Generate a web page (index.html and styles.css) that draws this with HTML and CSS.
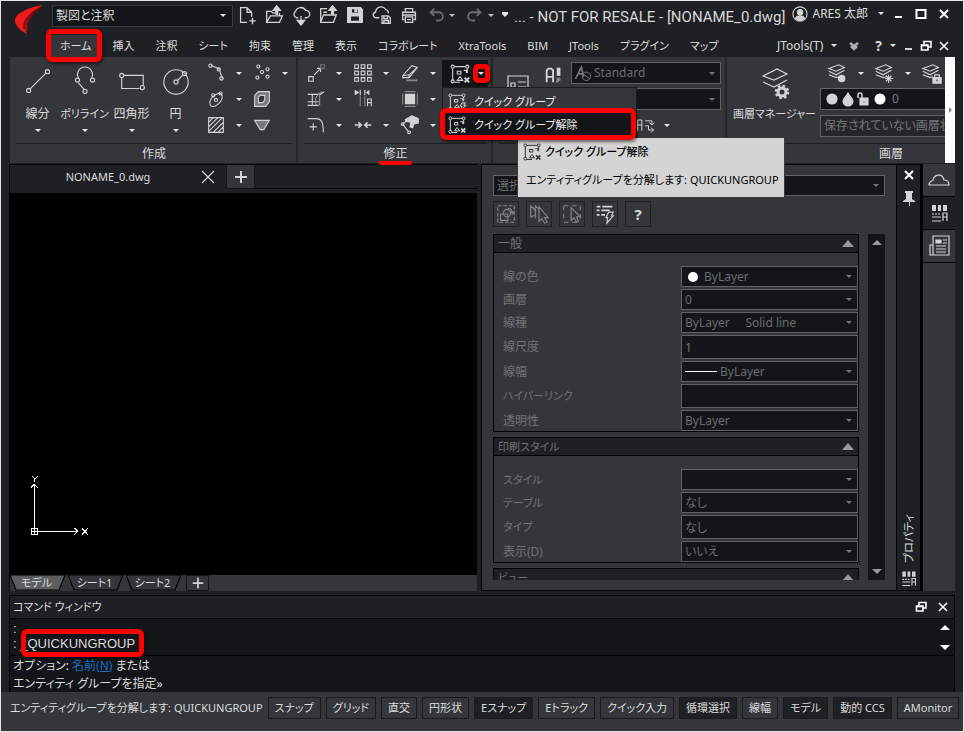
FILE: index.html
```html
<!DOCTYPE html>
<html lang="ja">
<head>
<meta charset="utf-8">
<title>ARES - NONAME_0.dwg</title>
<link rel="stylesheet" href="styles.css">
</head>
<body>
<svg class="defs" aria-hidden="true">
  <symbol id="i-new" viewBox="0 0 24 24"><path d="M12 20H5V4h7l5 5v5M12 4v5h5M18 15v7M14.500 18.500h7"/></symbol>
  <symbol id="i-open" viewBox="0 0 24 24"><path d="M4 20V8h5l2 2h2M4 20l4-7h13l-3 7zM18 13V10"/><path class="f" d="M15 2l4 5h-3v4h-2V7h-3z"/></symbol>
  <symbol id="i-cloud" viewBox="0 0 24 24"><path d="M9 15H7a4 4 0 0 1-1-7 6 6 0 0 1 11-1 4 4 0 0 1 1 8h-2M12 13v5"/><path class="f" d="M8 18h8l-4 5z"/></symbol>
  <symbol id="i-recent" viewBox="0 0 24 24"><path d="M4 20V5h7M18 8V4M4 20l3-8h14l-3 8zM7 9h4"/><path class="f" d="M17 2l4 5h-3v4h-2V7h-3z"/></symbol>
  <symbol id="i-save" viewBox="0 0 24 24"><path class="f" fill-rule="evenodd" d="M4 4h14l2 2v14H4zM8 5v5h8V5h-2v3h-2V5zM7 13v6h10v-6z"/></symbol>
  <symbol id="i-csave" viewBox="0 0 24 24"><path d="M9 15H6a3 3 0 0 1-1-6 6 6 0 0 1 11-3 4 4 0 0 1 3 4M12 13h7l2 2v6h-9zM14 13v3h4v-3M14 21v-3h5v3"/></symbol>
  <symbol id="i-print" viewBox="0 0 24 24"><path d="M8 9V5h8v4M7 17H5V9h14v8h-2M8 14h8v6H8zM10 17h4M5 12h14"/></symbol>
  <symbol id="i-undo" viewBox="0 0 24 24"><path stroke-width="2" d="M7 9h8a4 4 0 0 1 0 9h-3M10 5L6 9l4 4"/></symbol>
  <symbol id="i-redo" viewBox="0 0 24 24"><path stroke-width="2" d="M17 9H9a4 4 0 0 0 0 9h3M14 5l4 4-4 4"/></symbol>
  <symbol id="i-line" viewBox="0 0 32 32"><path d="M7 25L25 7"/><circle cx="6" cy="26" r="2.200"/><circle cx="26" cy="6" r="2.200"/></symbol>
  <symbol id="i-poly" viewBox="0 0 32 32"><path d="M15 25L9 18M9 13a8 8 0 1 1 14 0"/><circle cx="8" cy="15" r="2.200"/><circle cx="24" cy="15" r="2.200"/><circle cx="16" cy="27" r="2.200"/></symbol>
  <symbol id="i-rect" viewBox="0 0 32 32"><path d="M7 10h21v11M24 24H5V12"/><circle cx="5" cy="10" r="2.200"/><circle cx="27" cy="23" r="2.200"/></symbol>
  <symbol id="i-circ" viewBox="0 0 32 32"><circle cx="16" cy="17" r="13"/><path d="M17 16l6-6"/><circle cx="16" cy="17" r="2.200"/><circle cx="25" cy="8" r="2.200"/></symbol>
  <symbol id="i-arc" viewBox="0 0 24 24"><path d="M7 4l8 3 4 11"/><circle cx="6" cy="4" r="1.800"/><circle cx="15" cy="8" r="1.800"/><circle cx="18" cy="18" r="1.800"/></symbol>
  <symbol id="i-dots" viewBox="0 0 24 24"><circle cx="8" cy="5" r="1.700"/><circle cx="18" cy="8" r="1.700"/><circle cx="12" cy="11" r="1.700"/><circle cx="7" cy="17" r="1.700"/><circle cx="18" cy="16" r="1.700"/></symbol>
  <symbol id="i-ell" viewBox="0 0 24 24"><ellipse cx="12" cy="13" rx="8.500" ry="5" transform="rotate(-48 12 13)"/><circle cx="12" cy="13" r="1.700"/><circle cx="9" cy="8" r="1.700"/><circle cx="17" cy="6" r="1.700"/></symbol>
  <symbol id="i-region" viewBox="0 0 24 24"><path fill="#77797b" fill-rule="evenodd" d="M4 8l4-4h12v11l-4 5H4zM8 10l2-2h5v5l-2 3H8z"/></symbol>
  <symbol id="i-hatch" viewBox="0 0 24 24"><path d="M4 4h16v16H4zM4 9l5-5M4 14L14 4M4 19L19 4M9 20L20 9M14 20l6-6"/></symbol>
  <symbol id="i-wipe" viewBox="0 0 24 24"><path fill="#77797b" d="M4 7h16l-6 10h-4z"/></symbol>
  <symbol id="i-move" viewBox="0 0 24 24"><path d="M4 16h5v5H4zM10 14l6-6M13 7h4v4"/><path stroke="#777" d="M17 3h4v4h-4z"/></symbol>
  <symbol id="i-trim" viewBox="0 0 24 24"><path d="M3 7h14l4-3M3 15h12M3 19h12M8 7v11"/><path stroke="#999" d="M16 5v14M19 4c-8 4-8 7-7 15"/></symbol>
  <symbol id="i-fillet" viewBox="0 0 24 24"><path d="M3 5h9c6 0 8 4 8 15M5 14h8M9 10v8"/></symbol>
  <symbol id="i-array" viewBox="0 0 24 24"><path d="M3 3h4v4H3zM10 3h4v4h-4zM17 3h4v4h-4zM3 10h4v4H3zM10 10h4v4h-4zM17 10h4v4h-4zM3 17h4v4H3zM10 17h4v4h-4zM17 17h4v4h-4z"/></symbol>
  <symbol id="i-mirror" viewBox="0 0 24 24"><path class="f" stroke="none" d="M3 2l5 3-5 3zM19 2l-4 3 4 3z"/><path d="M9 2v6M14 2v6M17 20v-8h4v8M17 16h4"/><path stroke="#888" d="M9 9v11M14 9v11"/></symbol>
  <symbol id="i-join" viewBox="0 0 24 24"><path stroke-width="1.800" d="M3 12h7M7 9l3 3-3 3M21 12h-7M17 9l-3 3 3 3"/></symbol>
  <symbol id="i-erase" viewBox="0 0 24 24"><path d="M4 15L14 4l6 2-9 11H4zM4 15l7-1 9-8M11 14v3"/><path stroke-width="2" stroke="#888" d="M8 20h12"/></symbol>
  <symbol id="i-offset" viewBox="0 0 24 24"><path class="f" d="M7 7h10v10H7z"/><path stroke="#888" d="M4 6v12M20 6v12M6 4h12M6 20h12"/></symbol>
  <symbol id="i-hand" viewBox="0 0 24 24"><path class="f" d="M7 6l7-4 7 3v5l-5 1-1 4-3-1 1-5-6-1z"/><path d="M4 11l6 8M4 11l5-4"/><circle cx="11" cy="20" r="1.500"/><circle cx="4" cy="11" r="1.500"/></symbol>
  <symbol id="i-group" viewBox="0 0 24 24"><path d="M4 6v13M6 4h12M20 6v5M6 21h6M9 9h4v3H9zM16 8h3v3M12 15l-3 4h6z"/><circle cx="4" cy="4" r="1.700"/><circle cx="20" cy="4" r="1.700"/><circle cx="4" cy="20" r="1.700"/></symbol>
  <symbol id="i-ungroup" viewBox="0 0 24 24"><use href="#i-group"/><path stroke-width="2" d="M17 16l5 5M22 16l-5 5"/></symbol>
  <symbol id="i-qgroup" viewBox="0 0 24 24"><use href="#i-group"/><path fill="#35363a" d="M18 13h4l-2 3h3l-7 6 2-5h-2z"/></symbol>
  <symbol id="i-mtext" viewBox="0 0 24 24"><path d="M2 22V6h20v16M5 22v-9h4v9M5 17h4M12 12h8M12 17h8"/></symbol>
  <symbol id="i-style" viewBox="0 0 24 24"><path stroke-width="2" d="M4 20V7l2-2h3l2 2v13M4 14h7"/><path class="f" stroke="none" d="M15 4h4v9h-4z"/><path fill="#888" stroke="none" d="M15 15h4v3l-5 3z"/></symbol>
  <symbol id="i-annot" viewBox="0 0 24 24"><path stroke-width="2" d="M3 19l7-14 3 12M6 13h6"/><circle cx="16" cy="16" r="5"/><path d="M12 13l8 6"/></symbol>
  <symbol id="i-find" viewBox="0 0 24 24"><path d="M2 19V6h5v13M2 12h5M11 7h8v4M16 9l3 3 3-3M11 13h4v5h6M18 15l3 3-3 3"/></symbol>
  <symbol id="i-lman" viewBox="0 0 32 34"><path d="M4 10l14-7 10 5-13 6zM4 16l11 5 13-7"/><circle cx="23" cy="26" r="4" stroke-width="3"/><circle cx="23" cy="26" r="6" stroke-width="2.500" stroke-dasharray="2.400 2.300"/></symbol>
  <symbol id="i-lon" viewBox="0 0 24 24"><path d="M2 7l11-4 6 3-9 4zM2 10l8 4 9-5M2 14l8 3 3-1"/><circle class="f" cx="16" cy="18" r="3.500"/></symbol>
  <symbol id="i-lfr" viewBox="0 0 24 24"><path d="M2 7l11-4 6 3-9 4zM2 10l8 4 9-5M2 14l8 3 3-1M16 14v9M12 18h9M13 15l6 6M19 15l-6 6"/></symbol>
  <symbol id="i-llk" viewBox="0 0 24 24"><path d="M2 7l11-4 6 3-9 4zM2 10l8 4 9-5M2 14l8 3 3-1M15 17v-3h5v3"/><path class="f" d="M13 17h9v6h-9z"/><path stroke="#222" d="M17.500 19v2"/></symbol>
  <symbol id="i-pick" viewBox="0 0 24 24"><path stroke-dasharray="4 2" d="M3 3h18v18H3z"/><path d="M6 12h8v7H6zM14 6c4 0 5 2 5 5M17 9l2 3 2-3"/><circle cx="13" cy="11" r="4"/></symbol>
  <symbol id="i-multi" viewBox="0 0 24 24"><path d="M3 16V3l6 6M3 16l4-3M8 17V3l4 4M12 4v16l3-3 3 5 3-1-3-5h4z"/></symbol>
  <symbol id="i-sel" viewBox="0 0 24 24"><path stroke-dasharray="5 4" d="M3 3h18M3 3v18M21 3v18M3 21h18"/><path fill="#35363a" d="M11 5v14l3-3 3 5 2-1-2-5h4z"/></symbol>
  <symbol id="i-quick" viewBox="0 0 24 24"><path stroke-width="2" d="M3 4h4M9 4h11M3 8h3M8 8h9M3 13h3M8 13h4"/><path d="M16 10h5l-2 4h2l-7 8 1-6h-2z"/></symbol>
  <symbol id="i-prop" viewBox="0 0 24 24"><path class="f" stroke="none" d="M5 4h4v6H5zM11 4h3v6h-3zM16 4h4v6h-4z"/><path stroke-dasharray="2 1" d="M5 13h9"/><path d="M5 16h9M5 20h9M16 20v-8h4v8M16 16h4"/></symbol>
  <symbol id="i-news" viewBox="0 0 24 24"><path d="M6 2h16v19H3V11h3zM6 11v10M9 12h10M9 15h10M9 18h10M16 6h4M16 9h4"/><path class="f" d="M9 6h5v3H9z"/></symbol>
  <symbol id="i-cl" viewBox="0 0 24 24"><path d="M2 17c0-4 3-4 4-5 1-5 9-8 11 0 3 0 5 1 5 5z"/></symbol>
  <symbol id="i-pin" viewBox="0 0 16 16"><path class="f" stroke="none" d="M4 1h8v2h-1v6l3 2v1H9v4H8v-4H2v-1l3-2V3H4z"/></symbol>
  <symbol id="i-x" viewBox="0 0 12 12"><path d="M2 2l8 8M10 2l-8 8"/></symbol>
  <symbol id="i-rest" viewBox="0 0 12 12"><path d="M4 4V1.500h7V7H8.500M1.500 5h6.500v5H1.500z"/><path d="M1.500 5.500h6.500"/></symbol>
  <symbol id="i-max" viewBox="0 0 12 12"><path d="M1.500 2h9v8h-9z"/></symbol>
  <symbol id="i-min" viewBox="0 0 12 12"><path d="M3 9h7"/></symbol>
  <symbol id="i-plus" viewBox="0 0 16 16"><path d="M8 2v12M2 8h12"/></symbol>
</svg>

<div class="app">
  <header class="head">
    <svg class="logo" viewBox="0 0 34 34" aria-hidden="true"><path fill="#ee1c1c" d="M31 2C17 4 2 11 3 18c1 6 5 9 12 13-5-7-2-20 16-29z"/><path fill="#b80d12" d="M31 2C13 11 9 22 15 31c-1-10 3-18 16-29z"/><path d="M27 6C17 11 11 18 12 26M28 6c-8 5-12 10-13 16" stroke="#5b0c10" fill="none"/></svg>
    <div class="title">
      <div class="pick wspace"><select aria-label="ワークスペース"><option>製図と注釈</option></select></div>
      <button class="tb" aria-label="新規"><svg><use href="#i-new"/></svg></button>
      <button class="tb" aria-label="開く"><svg><use href="#i-open"/></svg></button>
      <button class="tb" aria-label="クラウドから開く"><svg><use href="#i-cloud"/></svg></button>
      <button class="tb" aria-label="最近の図面"><svg><use href="#i-recent"/></svg></button>
      <button class="tb" aria-label="保存"><svg><use href="#i-save"/></svg></button>
      <button class="tb" aria-label="クラウドに保存"><svg><use href="#i-csave"/></svg></button>
      <button class="tb" aria-label="印刷"><svg><use href="#i-print"/></svg></button>
      <button class="tb dim" aria-label="元に戻す"><svg><use href="#i-undo"/></svg></button>
      <i class="tri"></i>
      <button class="tb dim" aria-label="やり直し"><svg><use href="#i-redo"/></svg></button>
      <i class="tri"></i>
      <i class="tri more"></i>
      <h1>... - NOT FOR RESALE - [NONAME_0.dwg]</h1>
      <button class="user"><svg viewBox="0 0 18 18"><circle cx="9" cy="9" r="8"/><circle class="f" cx="9" cy="7" r="3"/><path class="f" d="M4 14c1-4 9-4 10 0-3 3-7 3-10 0z"/></svg><span>ARES 太郎</span><i class="tri"></i></button>
      <div class="wbtns">
        <button aria-label="最小化"><svg><use href="#i-min"/></svg></button>
        <button aria-label="最大化"><svg><use href="#i-max"/></svg></button>
        <button aria-label="閉じる"><svg><use href="#i-x"/></svg></button>
      </div>
    </div>
    <nav class="tabs">
      <button class="on">ホーム<span class="mark"></span></button><button>挿入</button><button>注釈</button><button>シート</button><button>拘束</button><button>管理</button><button>表示</button><button>コラボレート</button><button>XtraTools</button><button>BIM</button><button>JTools</button><button>プラグイン</button><button>マップ</button>
      <div class="right">
        <button class="jt">JTools(T)<i class="tri"></i></button>
        <svg class="chev" viewBox="0 0 12 12"><path stroke-width="2.500" d="M2 3l4 3 4-3M3 6l3 3 3-3"/></svg>
        <button class="help">?<i class="tri"></i></button>
        <div class="wbtns small">
          <button aria-label="図面を最小化"><svg><use href="#i-min"/></svg></button>
          <button aria-label="図面を元に戻す"><svg><use href="#i-rest"/></svg></button>
          <button aria-label="図面を閉じる"><svg><use href="#i-x"/></svg></button>
        </div>
      </div>
    </nav>
  </header>

  <section class="ribbon">
    <div class="group create">
      <div class="tools">
        <button class="big"><svg><use href="#i-line"/></svg>線分<i class="tri"></i></button>
        <button class="big kana"><svg><use href="#i-poly"/></svg>ポリライン<i class="tri"></i></button>
        <button class="big"><svg><use href="#i-rect"/></svg>四角形<i class="tri"></i></button>
        <button class="big"><svg><use href="#i-circ"/></svg>円<i class="tri"></i></button>
        <div class="smalls two">
          <button aria-label="円弧"><svg><use href="#i-arc"/></svg><i class="tri"></i></button>
          <button aria-label="点"><svg><use href="#i-dots"/></svg><i class="tri"></i></button>
          <button aria-label="楕円"><svg><use href="#i-ell"/></svg><i class="tri"></i></button>
          <button aria-label="領域"><svg><use href="#i-region"/></svg></button>
          <button aria-label="ハッチング"><svg><use href="#i-hatch"/></svg><i class="tri"></i></button>
          <button aria-label="ワイプアウト"><svg><use href="#i-wipe"/></svg></button>
        </div>
      </div>
      <h2>作成</h2>
    </div>
    <div class="group modify">
      <div class="tools">
        <div class="smalls three">
          <button aria-label="移動"><svg><use href="#i-move"/></svg><i class="tri"></i></button>
          <button aria-label="配列"><svg><use href="#i-array"/></svg><i class="tri"></i></button>
          <button aria-label="削除"><svg><use href="#i-erase"/></svg><i class="tri"></i></button>
          <button aria-label="トリム"><svg><use href="#i-trim"/></svg><i class="tri"></i></button>
          <button aria-label="鏡像"><svg><use href="#i-mirror"/></svg></button>
          <button aria-label="オフセット"><svg><use href="#i-offset"/></svg><i class="tri"></i></button>
          <button aria-label="フィレット"><svg><use href="#i-fillet"/></svg><i class="tri"></i></button>
          <button aria-label="結合"><svg><use href="#i-join"/></svg><i class="tri"></i></button>
          <button aria-label="編集"><svg><use href="#i-hand"/></svg><i class="tri"></i></button>
        </div>
        <div class="qg">
          <button class="qgbtn" aria-label="クイック グループ解除"><svg><use href="#i-ungroup"/></svg><i class="tri"></i></button>
          <span class="mark"></span>
          <div class="menu" role="menu">
            <button role="menuitem"><svg><use href="#i-qgroup"/></svg>クイック グループ</button>
            <button role="menuitem" class="on"><svg><use href="#i-ungroup"/></svg>クイック グループ解除</button>
            <span class="mark"></span>
          </div>
          <div class="tip" role="tooltip"><strong><svg><use href="#i-ungroup"/></svg>クイック グループ解除</strong><p>エンティティグループを分解します: QUICKUNGROUP</p></div>
        </div>
      </div>
      <h2><span>修正</span></h2>
    </div>
    <div class="group annot">
      <div class="tools">
        <svg class="mt"><use href="#i-mtext"/></svg>
        <svg class="st"><use href="#i-style"/></svg>
        <div class="fields">
          <div class="pick off"><svg><use href="#i-annot"/></svg><select aria-label="文字スタイル" disabled><option>Standard</option></select></div>
          <div class="pick off"><select aria-label="寸法スタイル" disabled><option></option></select></div>
          <div class="find"><svg><use href="#i-find"/></svg><i class="tri"></i></div>
        </div>
      </div>
      <h2></h2>
    </div>
    <div class="group layer">
      <div class="tools">
        <button class="big lm kana"><svg><use href="#i-lman"/></svg>画層マネージャー</button>
        <div class="lfields">
          <div class="smalls lay">
            <button aria-label="画層表示"><svg><use href="#i-lon"/></svg><i class="tri"></i></button>
            <button aria-label="画層フリーズ"><svg><use href="#i-lfr"/></svg><i class="tri"></i></button>
            <button aria-label="画層ロック"><svg><use href="#i-llk"/></svg></button>
          </div>
          <div class="lbox"><svg viewBox="0 0 64 18"><circle class="f" cx="8" cy="9" r="5"/><path class="f" d="M24 3c2 4 5 6 5 8a5 5 0 0 1-10 0c0-2 3-4 5-8z"/><path d="M34 8V5a2 2 0 0 1 4 0v4" stroke-width="1.500"/><path class="f" fill-rule="evenodd" d="M36 8h8v7h-8zM39 11h2v2h-2z"/><circle cx="56" cy="9" r="5.500" fill="#fff" stroke="none"/></svg>0</div>
          <div class="lbox st2">保存されていない画層状態</div>
        </div>
      </div>
      <h2>画層</h2>
    </div>
    <button class="scroll" aria-label="右へスクロール"></button>
  </section>

  <main class="main">
    <section class="draw">
      <div class="docs"><div class="doc"><span>NONAME_0.dwg</span><button aria-label="閉じる"><svg viewBox="0 0 16 16"><path d="M2 2l12 12M14 2L2 14"/></svg></button></div><button class="add" aria-label="新しい図面"><svg><use href="#i-plus"/></svg></button></div>
      <div class="canvas"><svg viewBox="0 0 64 64"><g stroke="#fff" fill="none" shape-rendering="crispEdges"><path d="M2.500 52.500h6v6h-6zM5.500 8v50M2 55.500h47M2 12l3-4 4 4M45 52l4 3-4 4M3 0l3 3 3-3M5.500 3v3M53 52l6 7M59 52l-6 7"/></g></svg></div>
      <div class="sheets">
        <button class="on"><svg viewBox="0 0 60 16" preserveAspectRatio="none"><path d="M0 0h55l-6 15H6z"/></svg><span>モデル</span></button>
        <button><svg viewBox="0 0 60 16" preserveAspectRatio="none"><path d="M0 0h55l-6 15H6z"/></svg><span>シート1</span></button>
        <button><svg viewBox="0 0 60 16" preserveAspectRatio="none"><path d="M0 0h55l-6 15H6z"/></svg><span>シート2</span></button>
        <button class="add" aria-label="シートを追加"><svg><use href="#i-plus"/></svg></button>
      </div>
    </section>
    <section class="props">
      <div class="pick off selbox"><select aria-label="選択" disabled><option>選択なし</option></select></div>
      <div class="pbtns">
        <button aria-label="選択に追加"><svg class="g"><use href="#i-pick"/></svg></button>
        <button aria-label="複数選択"><svg class="g"><use href="#i-multi"/></svg></button>
        <button aria-label="エンティティ選択"><svg class="g"><use href="#i-sel"/></svg></button>
        <button aria-label="スマート選択"><svg><use href="#i-quick"/></svg></button>
        <button>?</button>
      </div>
      <div class="plist">
        <div class="pscroll">
          <fieldset class="sec" disabled>
            <div class="shead">一般<i class="up"></i></div>
            <div class="rows">
              <label for="p1">線の色</label><div class="pick off"><i class="dot"></i><select id="p1"><option>ByLayer</option></select></div>
              <label for="p2">画層</label><div class="pick off"><select id="p2"><option>0</option></select></div>
              <label for="p3">線種</label><div class="pick off"><select id="p3"><option>ByLayer &nbsp; &nbsp; Solid line</option></select></div>
              <label for="p4">線尺度</label><input id="p4" value="1">
              <label for="p5">線幅</label><div class="pick off"><i class="rule"></i><select id="p5"><option>ByLayer</option></select></div>
              <label for="p6" class="kana">ハイパーリンク</label><input id="p6">
              <label for="p7">透明性</label><div class="pick off"><select id="p7"><option>ByLayer</option></select></div>
            </div>
          </fieldset>
          <fieldset class="sec" disabled>
            <div class="shead kana">印刷スタイル<i class="up"></i></div>
            <div class="rows">
              <label for="q1" class="kana">スタイル</label><div class="pick off"><select id="q1"><option></option></select></div>
              <label for="q2" class="kana">テーブル</label><div class="pick off"><select id="q2"><option>なし</option></select></div>
              <label for="q3" class="kana">タイプ</label><input id="q3" value="なし">
              <label for="q4">表示(D)</label><div class="pick off"><select id="q4"><option>いいえ</option></select></div>
            </div>
          </fieldset>
          <fieldset class="sec" disabled><div class="shead kana">ビュー<i class="up"></i></div></fieldset>
        </div>
        <div class="bar"><i class="up"></i><i class="down"></i></div>
      </div>
    </section>
    <aside class="pstrip">
      <button aria-label="閉じる"><svg class="px"><use href="#i-x"/></svg></button>
      <button aria-label="固定"><svg><use href="#i-pin"/></svg></button>
      <span>プロパティ</span>
      <svg class="pi"><use href="#i-prop"/></svg>
    </aside>
    <aside class="side">
      <button aria-label="クラウド"><svg><use href="#i-cl"/></svg></button>
      <button class="on" aria-label="プロパティ"><svg><use href="#i-prop"/></svg></button>
      <button aria-label="ニュース"><svg><use href="#i-news"/></svg></button>
    </aside>
  </main>

  <section class="cmd">
    <div class="chead">コマンド ウィンドウ<div class="wbtns small"><button aria-label="元に戻す"><svg><use href="#i-rest"/></svg></button><button aria-label="閉じる"><svg><use href="#i-x"/></svg></button></div></div>
    <div class="hist"><p>:</p><p>: <span class="cw">_QUICKUNGROUP<span class="mark"></span></span></p><i class="up w"></i><i class="down w"></i></div>
    <div class="ask"><p>オプション: <a href="#n">名前(<u>N</u>)</a> または</p><p>エンティティ グループを指定»</p></div>
  </section>

  <footer class="status">
    <span>エンティティグループを分解します: QUICKUNGROUP</span>
    <button>スナップ</button><button>グリッド</button><button>直交</button><button>円形状</button><button class="on">Eスナップ</button><button>Eトラック</button><button>クイック入力</button><button class="on">循環選択</button><button>線幅</button><button class="on">モデル</button><button class="on">動的 CCS</button><button>AMonitor</button>
  </footer>
</div>
</body>
</html>
```
FILE: styles.css
```css
* { box-sizing: border-box; }
html, body { margin: 0; height: 100%; }
body { background: #1f2023; color: #dcdcdc; font: 12px/16px "Noto Sans", "Noto Sans CJK JP", sans-serif; font-feature-settings: "palt"; overflow: hidden; }
button, select, input { font: inherit; font-feature-settings: inherit; color: inherit; background: none; border: 0; padding: 0; margin: 0; border-radius: 0; }
select { appearance: none; width: 100%; opacity: 1; }
h1, h2, p, fieldset { margin: 0; padding: 0; border: 0; min-width: 0; font-weight: 400; }
svg { fill: none; stroke: #d4d4d4; stroke-width: 1.2; display: block; flex: none; }
.f { fill: #d4d4d4; }
.defs { position: absolute; width: 0; height: 0; }
.app { height: 100vh; display: flex; flex-direction: column; border: 1px solid #e4e9e7; }
.tri { width: 0; height: 0; border: 3px solid transparent; border-top-color: #e8e8e8; border-bottom: 0; flex: none; }
.up, .down { width: 0; height: 0; border: 5px solid transparent; flex: none; }
.up { border-top: 0; border-bottom-color: #9a9a9a; }
.down { border-bottom: 0; border-top-color: #9a9a9a; }
.up.w { border-bottom-color: #fff; }
.down.w { border-top-color: #fff; }
.mark { position: absolute; border: 5px solid #f00; border-radius: 6px; pointer-events: none; box-shadow: 1px 2px 3px rgba(0, 0, 0, .5); }

.pick { position: relative; display: flex; align-items: center; height: 22px; background: #141518; border: 1px solid #3c3d40; }
.pick::after { content: ""; position: absolute; right: 6px; border: 3px solid transparent; border-top-color: #e8e8e8; border-bottom: 0; }
.pick select { padding: 0 3px; height: 100%; }
.pick.off { border-color: #626262; color: #6c6c6c; }
.pick.off::after { border-top-color: #777; right: 5px; }

.head { position: relative; z-index: 3; display: grid; grid-template-columns: 49px 1fr; grid-template-rows: 29px 27px; flex: none; }
.logo { grid-row: 1 / 3; width: 34px; height: 34px; margin: 2px 0 0 11px; stroke: none; }
.title { display: flex; align-items: center; padding-left: 2px; min-width: 0; }
.wspace { width: 181px; flex: none; }
.tb { width: 27px; height: 24px; flex: none; display: flex; justify-content: center; }
.tb svg { width: 22px; height: 22px; stroke-width: 1.4; }
.dim svg { opacity: .42; }
.title > .tri { margin-right: 6px; opacity: .8; }
.title > .tri + .tri { margin-left: 2px; }
.title > .more { position: relative; opacity: 1; margin-right: 4px; }
.more::before { content: ""; position: absolute; left: -3px; top: -5px; width: 6px; height: 2px; background: #e8e8e8; }
.title h1 { font: 15px/24px Roboto, "Noto Sans CJK JP", sans-serif; color: #d8d8d8; white-space: nowrap; flex: 1; padding: 2px 0 0 2px; min-width: 0; }
.user { display: flex; align-items: center; gap: 4px; white-space: nowrap; padding-bottom: 4px; }
.user svg { width: 16px; height: 16px; }
.user .tri { margin-left: 6px; }
.wbtns { display: flex; gap: 11px; padding: 0 13px 4px 8px; }
.wbtns svg { width: 12px; height: 12px; stroke: #fff; stroke-width: 2; }
.tabs { display: flex; align-items: center; padding-top: 4px; gap: 1px; }
.tabs > button { position: relative; padding: 0 10px; height: 22px; white-space: nowrap; font-size: 11px; }
.tabs > .on { background: #35363a; }
.tabs .mark { inset: -6px -1px -5px -4px; }
.right { display: flex; align-items: center; margin-left: auto; gap: 11px; }
.jt, .help { display: flex; align-items: center; gap: 8px; }
.help { font-weight: 700; font-size: 14px; padding-left: 4px; }
.chev { width: 12px; height: 12px; opacity: .8; }
.small { gap: 6px; padding: 0 13px 0 0; }
.right .small { margin-left: -5px; }
.small svg { stroke-width: 1.6; }

.ribbon { display: flex; height: 106px; flex: none; margin: 0 8px 0 9px; }
.group { position: relative; display: flex; flex-direction: column; background: #35363a; border-right: 2px solid #25262a; min-width: 0; }
.tools { display: flex; height: 86px; padding: 3px 4px 0 6px; }
.group h2 { font-size: 12px; line-height: 19px; height: 20px; text-align: center; border-top: 1px solid #1c1d20; margin: 0 4px 0 6px; }
.create { flex: 0 0 288px; }
.create .tools { padding-left: 4px; }
.modify { flex: 0 0 195px; z-index: 2; }
.annot { flex: 0 0 234px; }
.layer { flex: 1; overflow: hidden; border: 0; }
.layer .tools, .layer h2 { width: 328px; flex: none; margin-left: 0; }
.scroll { width: 10px; background: #fff; position: relative; }
.scroll::after { content: ""; position: absolute; left: 4px; top: 50px; border: 3px solid transparent; border-left-color: #888; border-right: 0; }
.big { display: flex; flex-direction: column; align-items: center; width: 47px; white-space: nowrap; padding-top: 6px; font-size: 12px; line-height: 18px; flex: none; }
.big svg { width: 30px; height: 30px; margin-bottom: 9px; }
.big .tri { margin-top: 6px; }
.big:nth-child(4) { width: 41px; }
.kana { font-size: 11px; }
.smalls { display: grid; grid-auto-rows: 26px; align-content: start; flex: none; margin-left: 8px; }
.two { grid-template-columns: 46px 46px; }
.three { grid-template-columns: 47px 47px 44px; margin-left: 0; }
.smalls button { display: flex; align-items: center; gap: 8px; }
.smalls svg { width: 24px; height: 22px; }
.qg { position: relative; width: 46px; }
.qgbtn { display: flex; align-items: center; width: 46px; height: 27px; padding-left: 7px; gap: 7px; background: #141518; }
.qgbtn svg { width: 22px; height: 22px; }
.qg > .mark { left: 31px; top: 4px; width: 17px; height: 19px; border-radius: 5px; }
.menu { position: absolute; left: 0; top: 27px; width: 195px; background: #35363a; border: 1px solid #1b1c1f; padding: 2px 0 1px; z-index: 1; }
.menu button { display: flex; align-items: center; gap: 7px; width: 100%; height: 23px; padding-left: 4px; white-space: nowrap; color: #f0f0f0; font-size: 11px; }
.menu .on { background: #141518; }
.menu svg { width: 20px; height: 20px; }
.menu .mark { left: -3px; top: 20px; width: 196px; height: 32px; }
.tip { position: absolute; left: 75px; top: 77px; width: 268px; height: 61px; background: #d4d4d4; border: 1px solid #3a3a3a; color: #000; padding: 3px 8px 0 4px; white-space: nowrap; font-size: 11px; }
.tip strong { display: flex; align-items: center; gap: 3px; font-weight: 500; }
.tip svg { width: 20px; height: 22px; stroke: #333; }
.tip p { padding: 9px 0 0 4px; }
.modify h2 span { border-bottom: 4px solid #f00; border-radius: 2px; padding: 0 4px; display: inline-block; height: 21px; }
.mt { width: 24px; height: 24px; margin: 10px 9px 0 7px; }
.st { width: 22px; height: 22px; margin: 4px 6px 0 4px; }
.fields { flex: 1; display: flex; flex-direction: column; gap: 4px; padding-top: 2px; min-width: 0; }
.fields .pick svg { width: 22px; height: 20px; stroke: #777; }
.fields .pick select { padding: 0; }
.find { display: flex; align-items: center; gap: 8px; padding-left: 65px; }
.find svg { width: 20px; height: 22px; }
.lm { width: 83px; }
.lm svg { width: 32px; height: 34px; margin-bottom: 5px; }
.lfields { padding-left: 4px; flex: 1; min-width: 0; }
.lay { grid-template-columns: 47px 47px 30px; margin-left: 6px; }
.lbox { display: flex; align-items: center; gap: 4px; height: 22px; background: #141518; border: 1px solid #626262; color: #777; white-space: nowrap; margin: 2px 0 5px; padding-left: 3px; }
.lbox svg { width: 64px; height: 18px; }
.st2 { background: #25262a; }

.main { flex: 1; min-height: 0; display: flex; margin: 1px 8px 0 8px; }
.draw { flex: 1; display: flex; flex-direction: column; min-width: 0; margin-right: 4px; border-left: 1px solid #000; border-top: 1px solid #000; }
.docs { display: flex; height: 28px; background: #1f2023; border-bottom: 4px solid #1f2023; }
.doc { flex: 0 0 216px; display: flex; align-items: center; }
.doc span { flex: 1; text-align: center; padding-left: 6px; font-size: 11px; }
.doc button svg { width: 16px; height: 16px; }
.doc button { margin-right: 10px; }
.add { background: #35363a; display: flex; align-items: center; justify-content: center; border: 1px solid #15161a; }
.add svg { width: 16px; height: 16px; stroke-width: 2; }
.docs .add { width: 29px; border-top: 0; }
.docs::after { content: ""; flex: 1; border-bottom: 1px solid #000; }
.canvas { flex: 1; background: #000; display: flex; align-items: flex-end; padding: 0 18px 35px 19px; }
.canvas svg { width: 64px; height: 64px; }
.sheets { display: flex; height: 16px; background: #35363a; }
.sheets button { position: relative; width: 58px; height: 16px; font-size: 11px; }
.sheets button svg { position: absolute; left: 0; top: 0; width: 60px; height: 16px; fill: #35363a; stroke: #000; }
.sheets button span { position: relative; padding-right: 5px; }
.sheets .on svg { fill: #5c5d5f; }
.sheets .add { width: 23px; margin-left: 2px; }
.sheets .add svg { position: static; width: 14px; height: 14px; stroke: #d4d4d4; }

.props { flex: 0 0 416px; background: #35363a; border: 1px solid #000; display: flex; flex-direction: column; padding: 10px 11px 10px; min-width: 0; }
.props .selbox { flex: none; height: 21px; }
.pbtns { display: flex; gap: 7px; margin: 5px 0 7px; }
.pbtns button { width: 26px; height: 26px; border: 1px solid #202124; display: flex; align-items: center; justify-content: center; font-weight: 700; font-size: 15px; }
.pbtns svg { width: 22px; height: 22px; }
.pbtns .g { stroke: #868686; }
.plist { flex: 1; display: flex; gap: 9px; min-height: 0; }
.pscroll { flex: 1; overflow: hidden; min-width: 0; }
.sec { border: 1px solid #000; margin-bottom: 5px; color: #727272; }
.shead { height: 18px; line-height: 17px; display: flex; align-items: center; justify-content: space-between; background: #1f2023; border-bottom: 1px solid #000; padding: 0 4px; }
.shead .up { border-width: 0 6px 7px; }
.rows { display: grid; grid-template-columns: 1fr 177px; row-gap: 2px; padding-top: 13px; align-items: center; }
.rows label { padding-left: 9px; }
.rows .pick { height: 21px; }
.rows input { height: 24px; width: 100%; background: #141518; border: 1px solid #626262; padding: 0 3px; }
.dot { width: 10px; height: 10px; border-radius: 50%; background: #fff; margin: 0 3px 0 6px; flex: none; }
.rule { width: 32px; height: 1px; background: #fff; margin-left: 3px; flex: none; }
.bar { width: 17px; background: #141518; display: flex; flex-direction: column; justify-content: space-between; align-items: center; padding: 6px 0; }

.pstrip { width: 24px; flex: none; background: #1f2023; border: 1px solid #000; border-left: 0; display: flex; flex-direction: column; align-items: center; padding: 4px 0 1px; gap: 9px; }
.pstrip svg { width: 16px; height: 16px; }
.pstrip .px { width: 12px; height: 12px; stroke: #fff; stroke-width: 2; }
.pstrip span { margin-top: auto; writing-mode: vertical-rl; text-orientation: sideways; transform: rotate(180deg); font-size: 11px; }
.pstrip .pi { width: 21px; height: 21px; margin-top: -4px; }
.side { width: 34px; flex: none; background: #35363a; border-left: 2px solid #000; }
.side button { display: flex; align-items: center; justify-content: center; width: 100%; height: 33px; border-bottom: 1px solid #000; }
.side .on { background: #1f2023; }
.side svg { width: 24px; height: 24px; }

.cmd { flex: none; margin: 4px 8px 0; height: 97px; background: #141518; border: 1px solid #000; border-bottom: 0; }
.chead { display: flex; align-items: center; justify-content: space-between; height: 23px; background: #1f2023; border-bottom: 1px solid #000; padding-left: 3px; font-size: 11px; }
.cmd .small { gap: 10px; padding-right: 5px; }
.hist { position: relative; height: 37px; border-bottom: 1px solid #000; font: 13px/15px "Liberation Sans", sans-serif; padding: 2px 3px 0; }
.cw { position: relative; }
.cw .mark { left: 1px; top: -7px; width: 123px; height: 28px; }
.hist > .up, .hist > .down { position: absolute; right: 4px; top: 6px; }
.hist > .down { top: 26px; }
.ask { padding: 1px 3px; line-height: 18px; white-space: nowrap; }
.ask a { color: #1173c4; text-decoration: none; }
.status { flex: none; height: 39px; background: #35363a; display: flex; align-items: flex-start; gap: 5px; padding: 5px 8px 0 9px; overflow: hidden; white-space: nowrap; font-size: 11px; line-height: 20px; }
.status span { line-height: 22px; }
.status button { height: 22px; padding: 0 6px; border: 1px solid #1a1b1e; flex: none; }
.status .on { background: #1f2023; }
```
